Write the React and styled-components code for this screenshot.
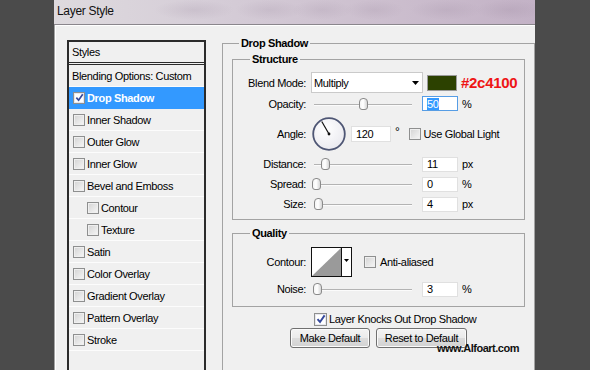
import React from 'react';
import styled, { createGlobalStyle } from 'styled-components';

const GlobalStyle = createGlobalStyle`
  html, body { margin: 0; padding: 0; background: #4b4b4b; }
  body {
    font-family: "Liberation Sans", Arial, sans-serif;
    font-size: 11px;
    letter-spacing: -0.35px;
    color: #000;
  }
  * { box-sizing: border-box; }
`;

const Screen = styled.div`
  position: relative;
  width: 590px;
  height: 370px;
  overflow: hidden;
  background: #4b4b4b;
  display: flex;
`;

const Window = styled.div`
  margin-left: 54px;
  width: 481px;
  height: 100%;
  display: flex;
  flex-direction: column;
`;

const TitleBar = styled.div`
  height: 25px;
  flex: none;
  padding-left: 3px;
  font-size: 12px;
  letter-spacing: -0.3px;
  line-height: 22px;
  color: #111;
  border-bottom: 1px solid #8a868c;
  background:
    radial-gradient(ellipse 40px 10px at 140px 10px, rgba(130, 110, 135, 0.14), transparent),
    radial-gradient(ellipse 34px 10px at 215px 10px, rgba(130, 110, 135, 0.13), transparent),
    radial-gradient(ellipse 30px 10px at 268px 10px, rgba(130, 110, 135, 0.13), transparent),
    radial-gradient(ellipse 30px 10px at 320px 10px, rgba(130, 110, 135, 0.13), transparent),
    radial-gradient(ellipse 36px 10px at 392px 10px, rgba(130, 110, 135, 0.13), transparent),
    radial-gradient(ellipse 34px 10px at 455px 10px, rgba(130, 110, 135, 0.14), transparent),
    linear-gradient(90deg, #dedade 0%, #d6ced8 30%, #cdc0cf 65%, #c3b2c6 100%);
`;

const Body = styled.div`
  flex: 1;
  display: flex;
  align-items: flex-start;
  gap: 16px;
  padding: 12px 0 0 12px;
  overflow: hidden;
  background: #f0f0f0;
  border-left: 1px solid #a3a3a3;
  box-shadow: inset 1px 1px 0 #ffffff;
`;

const StylesPanel = styled.div`
  flex: none;
  width: 139px;
  height: 345px;
  margin-top: 3px;
  border: 2px solid #2b2b2b;
  border-bottom: none;
  display: flex;
  flex-direction: column;
`;

const PanelHeader = styled.div`
  height: 23px;
  padding-left: 3px;
  line-height: 20px;
  border-bottom: 3px double #2b2b2b;
`;

const StyleRow = styled.div`
  height: 22px;
  flex: none;
  display: flex;
  align-items: center;
  gap: 2px;
  padding-left: ${p => 4 + p.$indent * 14}px;
  border-bottom: 1px solid ${p => (p.$selected ? '#3399ff' : '#fcfcfc')};
  background: ${p => (p.$selected ? '#3399ff' : 'transparent')};
  color: ${p => (p.$selected ? '#ffffff' : '#000000')};
  font-weight: ${p => (p.$selected ? 'bold' : 'normal')};
`;

const RowText = styled.span`
  margin-left: ${p => (p.$plain ? -1 : 0)}px;
`;

const Box = styled.span`
  flex: none;
  width: ${p => p.$size}px;
  height: ${p => p.$size}px;
  border: 1px solid #8e8f8f;
  background: ${p => (p.$checked ? '#ffffff' : 'linear-gradient(135deg, #d3d3d3, #f7f7f7)')};
  box-shadow: inset 0 0 0 1px ${p => (p.$checked ? '#e8e8ee' : '#efefef')};
  display: flex;
  align-items: center;
  justify-content: center;
`;

const CheckBox = ({ size = 12, checked }) => (
  <Box $size={size} $checked={checked}>
    {checked && (
      <svg width={size - 3} height={size - 3} viewBox="0 0 10 10">
        <path d="M1.5 5.2 L4 8 L8.6 1.4" fill="none" stroke="#34489c" strokeWidth="1.9" />
      </svg>
    )}
  </Box>
);

const RightColumn = styled.fieldset`
  flex: none;
  width: 313px;
  height: 350px;
  margin: 0;
  min-width: 0;
  padding: 4px 9px 0 9px;
  border: 1px solid #a3a3a3;
  display: flex;
  flex-direction: column;
`;

const Group = styled.fieldset`
  margin: ${p => p.$mt}px 0 0 0;
  min-width: 0;
  width: 293px;
  padding: ${p => p.$pt}px 0 ${p => p.$pb}px 0;
  border: 1px solid #a3a3a3;
`;

const Legend = styled.legend`
  font-weight: bold;
  line-height: 12px;
  padding: 0 2px;
  margin-left: ${p => p.$offset}px;
`;

const FieldRow = styled.div`
  display: flex;
  align-items: center;
  height: ${p => p.$h}px;
  margin-top: ${p => p.$mt || 0}px;
`;

const FieldLabel = styled.span`
  flex: none;
  width: 73px;
  text-align: right;
`;

const Select = styled.div`
  flex: none;
  margin-left: 5px;
  width: 112px;
  height: 21px;
  background: #fff;
  border: 1px solid #cacaca;
  display: flex;
  align-items: center;
  justify-content: space-between;
  padding: 0 3px 0 2px;
`;

const Swatch = styled.div`
  flex: none;
  margin-left: 4px;
  width: 30px;
  height: 16px;
  background: ${p => p.$color};
  border: 1px solid #9b9b9b;
`;

const HexNote = styled.span`
  margin-left: 4px;
  font-size: 15px;
  font-weight: bold;
  letter-spacing: -0.3px;
  color: #ee1515;
  line-height: 1;
`;

const Slider = styled.div`
  position: relative;
  flex: none;
  margin-left: 8px;
  width: 98px;
  height: 14px;
  &::before {
    content: '';
    position: absolute;
    left: 0;
    right: 0;
    top: 7px;
    height: 1px;
    background: #b3b3b3;
    box-shadow: 0 1px 0 #fbfbfb;
  }
`;

const Thumb = styled.div`
  position: absolute;
  top: 1px;
  width: 9px;
  height: 12px;
  border: 1px solid #8a8a8a;
  border-radius: 4px 4px 3px 3px;
  background: linear-gradient(90deg, #f4f4f4 0%, #ffffff 45%, #d6d6d6 100%);
`;

const NumInput = styled.div`
  flex: none;
  margin-left: ${p => p.$ml}px;
  width: ${p => p.$w}px;
  height: ${p => p.$h || 15}px;
  background: #fff;
  border: 1px solid ${p => (p.$focused ? '#569de5' : '#e0e0e0')};
  padding-left: 4px;
  display: flex;
  align-items: center;
`;

const Selected = styled.span`
  background: #3399ff;
  color: #fff;
  line-height: 12px;
`;

const Unit = styled.span`
  margin-left: 4px;
`;

const Degree = styled.span`
  margin-left: 4px;
  margin-bottom: 5px;
  font-size: 12px;
`;

const InlineCheck = styled.label`
  display: flex;
  align-items: center;
  gap: ${p => p.$gap}px;
  margin-left: ${p => p.$ml}px;
`;

const DialWrap = styled.div`
  flex: none;
  margin-left: 6px;
  width: 34px;
  height: 34px;
`;

const ContourPicker = styled.div`
  flex: none;
  margin-left: 5px;
  width: 41px;
  height: 30px;
  border: 1px solid #111;
  background: #fff;
  display: flex;
`;

const ContourArrow = styled.div`
  flex: 1;
  border-left: 1px solid #111;
  display: flex;
  align-items: center;
  justify-content: center;
  padding-bottom: 3px;
`;

const KnockRow = styled.div`
  display: flex;
  align-items: center;
  gap: 2px;
  height: 16px;
  margin-top: 4px;
  padding-left: 82px;
`;

const ButtonRow = styled.div`
  display: flex;
  justify-content: center;
  gap: 6px;
  margin-top: 1px;
  width: 293px;
`;

const Button = styled.div`
  width: ${p => p.$w}px;
  height: 20px;
  border: 1px solid #707070;
  border-radius: 3px;
  display: flex;
  align-items: center;
  justify-content: center;
  background: linear-gradient(#f3f3f3 0%, #ebebeb 48%, #dcdcdc 52%, #d2d2d2 100%);
  box-shadow: inset 0 0 0 1px #fbfbfb;
`;

const Watermark = styled.div`
  position: absolute;
  left: 437px;
  top: 342px;
  font-size: 11px;
  font-weight: bold;
  letter-spacing: -0.5px;
  color: #111;
`;

const DownArrow = () => (
  <svg width="7" height="4" viewBox="0 0 7 4">
    <polygon points="0,0 7,0 3.5,4" fill="#000" />
  </svg>
);

const Dial = ({ angle }) => {
  const r = (angle * Math.PI) / 180;
  const x = 17 + Math.cos(r) * 14.5;
  const y = 17 - Math.sin(r) * 14.5;
  return (
    <DialWrap>
      <svg width="34" height="34" viewBox="0 0 34 34">
        <defs>
          <radialGradient id="dialFill" cx="40%" cy="35%" r="70%">
            <stop offset="0%" stopColor="#ffffff" />
            <stop offset="100%" stopColor="#e9e9ef" />
          </radialGradient>
        </defs>
        <circle cx="17" cy="17" r="15.8" fill="url(#dialFill)" stroke="#4e5674" strokeWidth="1.8" />
        <line x1="17" y1="17" x2={x} y2={y} stroke="#111" strokeWidth="1.2" />
        <circle cx="17" cy="17" r="1.4" fill="#111" />
      </svg>
    </DialWrap>
  );
};

const SliderControl = ({ pos }) => (
  <Slider>
    <Thumb style={{ left: `${pos - 4.5}px` }} />
  </Slider>
);

const styleItems = [
  { name: 'Drop Shadow', checked: true, selected: true },
  { name: 'Inner Shadow' },
  { name: 'Outer Glow' },
  { name: 'Inner Glow' },
  { name: 'Bevel and Emboss' },
  { name: 'Contour', indent: 1 },
  { name: 'Texture', indent: 1 },
  { name: 'Satin' },
  { name: 'Color Overlay' },
  { name: 'Gradient Overlay' },
  { name: 'Pattern Overlay' },
  { name: 'Stroke' },
];

const sliderRows = [
  { label: 'Distance:', value: '11', unit: 'px', pos: 11 },
  { label: 'Spread:', value: '0', unit: '%', pos: 2 },
  { label: 'Size:', value: '4', unit: 'px', pos: 4 },
];

export default function App() {
  return (
    <>
      <GlobalStyle />
      <Screen>
        <Window>
          <TitleBar>Layer Style</TitleBar>
          <Body>
            <StylesPanel>
              <PanelHeader>Styles</PanelHeader>
              <StyleRow $indent={0}>
                <RowText $plain>Blending Options: Custom</RowText>
              </StyleRow>
              {styleItems.map(item => (
                <StyleRow key={item.name} $indent={item.indent || 0} $selected={item.selected}>
                  <CheckBox size={12} checked={item.checked} />
                  <RowText>{item.name}</RowText>
                </StyleRow>
              ))}
            </StylesPanel>

            <RightColumn>
              <Legend $offset={7}>Drop Shadow</Legend>

              <Group $mt={0} $pt={7} $pb={5}>
                <Legend $offset={17}>Structure</Legend>
                <FieldRow $h={21}>
                  <FieldLabel>Blend Mode:</FieldLabel>
                  <Select>
                    <span>Multiply</span>
                    <DownArrow />
                  </Select>
                  <Swatch $color="#2c4100" />
                  <HexNote>#2c4100</HexNote>
                </FieldRow>
                <FieldRow $h={21}>
                  <FieldLabel>Opacity:</FieldLabel>
                  <SliderControl pos={49} />
                  <NumInput $ml={10} $w={36} $focused>
                    <Selected>50</Selected>
                  </NumInput>
                  <Unit>%</Unit>
                </FieldRow>
                <FieldRow $h={40}>
                  <FieldLabel>Angle:</FieldLabel>
                  <Dial angle={120} />
                  <NumInput $ml={5} $w={40} $h={16}>120</NumInput>
                  <Degree>°</Degree>
                  <InlineCheck $ml={10} $gap={2}>
                    <CheckBox size={12} />
                    <span>Use Global Light</span>
                  </InlineCheck>
                </FieldRow>
                {sliderRows.map(r => (
                  <FieldRow key={r.label} $h={20}>
                    <FieldLabel>{r.label}</FieldLabel>
                    <SliderControl pos={r.pos} />
                    <NumInput $ml={10} $w={36}>{r.value}</NumInput>
                    <Unit>{r.unit}</Unit>
                  </FieldRow>
                ))}
              </Group>

              <Group $mt={7} $pt={8} $pb={7}>
                <Legend $offset={17}>Quality</Legend>
                <FieldRow $h={30}>
                  <FieldLabel>Contour:</FieldLabel>
                  <ContourPicker>
                    <svg width="29" height="28" viewBox="0 0 29 28">
                      <polygon points="0,28 29,0 29,28" fill="#9a9a9a" />
                    </svg>
                    <ContourArrow>
                      <svg width="5" height="3" viewBox="0 0 5 3">
                        <polygon points="0,0 5,0 2.5,3" fill="#000" />
                      </svg>
                    </ContourArrow>
                  </ContourPicker>
                  <InlineCheck $ml={12} $gap={4}>
                    <CheckBox size={12} />
                    <span>Anti-aliased</span>
                  </InlineCheck>
                </FieldRow>
                <FieldRow $h={20} $mt={2}>
                  <FieldLabel>Noise:</FieldLabel>
                  <SliderControl pos={3} />
                  <NumInput $ml={10} $w={36}>3</NumInput>
                  <Unit>%</Unit>
                </FieldRow>
              </Group>

              <KnockRow>
                <CheckBox size={13} checked />
                <span>Layer Knocks Out Drop Shadow</span>
              </KnockRow>
              <ButtonRow>
                <Button $w={80}>Make Default</Button>
                <Button $w={91}>Reset to Default</Button>
              </ButtonRow>
            </RightColumn>
          </Body>
        </Window>
        <Watermark>www.Alfoart.com</Watermark>
      </Screen>
    </>
  );
}
